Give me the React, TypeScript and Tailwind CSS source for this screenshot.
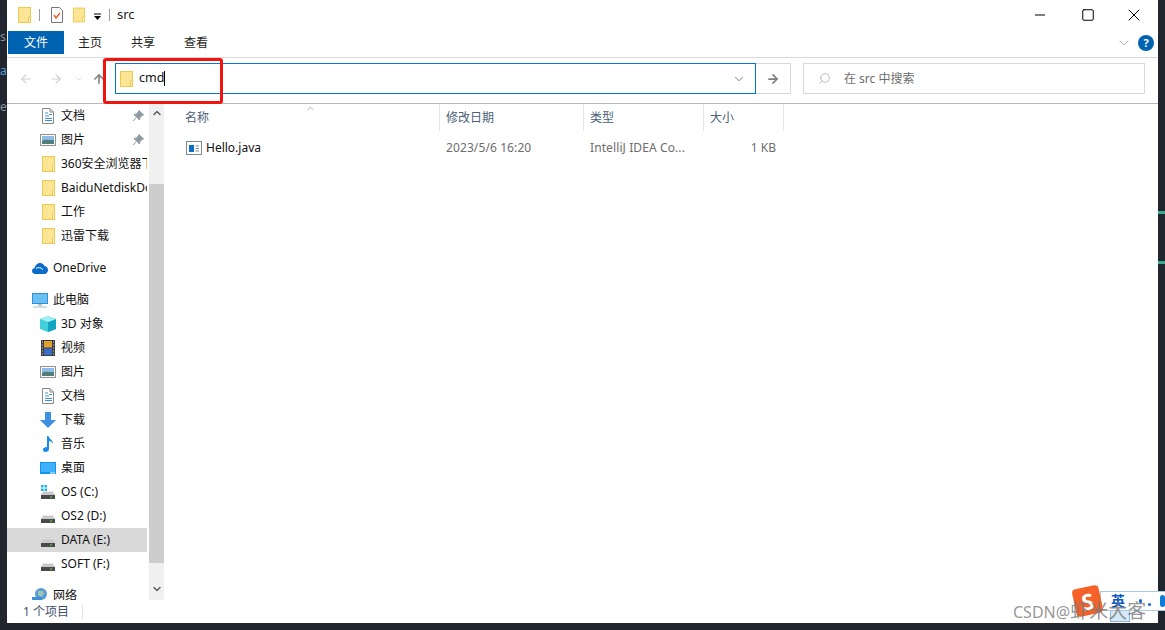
import { ArrowLeft, ArrowRight, ArrowUp, ChevronDown, ChevronUp, Minus, Search, Square, X } from 'lucide-react';
import type { ReactNode } from 'react';

const Folder = ({ className = 'w-[13px] h-[16px]' }: { className?: string }) => (
  <svg viewBox="0 0 13 16" className={className}>
    <rect x="0.5" y="0.5" width="12" height="15" fill="#fde596" stroke="#efc94f" />
    <path d="M10.500 10v5.500" stroke="#efc94f" />
    <path d="M10.500 10H12.500" stroke="#efc94f" />
    <rect x="11" y="10.500" width="1" height="4.500" fill="#fff6d0" />
  </svg>
);

const DocIcon = () => (
  <svg viewBox="0 0 12 16" className="w-[12px] h-[16px]">
    <path d="M.5.5h7.500l3.500 3.500v11.500H.5z" fill="#fff" stroke="#8a8a8a" />
    <path d="M8 .5V4h3.500" fill="none" stroke="#8a8a8a" />
    <path d="M3 5h3M7 6.500h3M3 8h4M3 10.500h7M3 12.500h7" stroke="#3f8fd6" />
  </svg>
);

const PicIcon = () => (
  <svg viewBox="0 0 16 12" className="w-[16px] h-[12px]">
    <rect x="0.5" y="0.5" width="15" height="11" fill="#fff" stroke="#8f8f8f" />
    <rect x="2" y="2" width="12" height="8" fill="#8fbce6" />
    <path d="M2 7c3-2 6-1 12-1v4H2z" fill="#4f7f78" />
  </svg>
);

const Video = () => (
  <svg viewBox="0 0 14 16" className="w-[14px] h-[16px]">
    <rect width="14" height="16" fill="#3c3c3c" />
    <rect x="3" y="1" width="8" height="6.500" fill="#e0a030" />
    <rect x="3" y="8.500" width="8" height="6.500" fill="#3a6fc8" />
    <path d="M1 2h1M1 5h1M1 8h1M1 11h1M1 14h1M12 2h1M12 5h1M12 8h1M12 11h1M12 14h1" stroke="#ddd" />
  </svg>
);

const Cube = () => (
  <svg viewBox="0 0 16 16" className="w-[16px] h-[16px]">
    <path d="M8 0l8 3v10l-8 3-8-3V3z" fill="#3fd0dc" />
    <path d="M8 6l8-3v10l-8 3z" fill="#12a5c4" />
    <path d="M8 0l8 3-8 3-8-3z" fill="#a2eef0" />
  </svg>
);

const Down = () => (
  <svg viewBox="0 0 16 16" className="w-[16px] h-[16px]">
    <path d="M5 0h6v8h5l-8 8-8-8h5z" fill="#3c92e0" />
  </svg>
);

const Music = () => (
  <svg viewBox="0 0 12 16" className="w-[12px] h-[16px]">
    <path d="M5 0h1.500c.5 3 4.500 3.500 4.500 8-1-2-2.500-3-4-3v8c0 2-1.500 3-3.500 3S1 15 1 13.500 2.500 11 5 11z" fill="#1c8ce8" />
  </svg>
);

const Desk = () => (
  <svg viewBox="0 0 16 12" className="w-[16px] h-[12px]">
    <rect width="16" height="12" fill="#1296ee" />
    <rect x="1" y="1" width="14" height="9" fill="#3fb1fa" />
    <path d="M10 11h5" stroke="#fff" />
  </svg>
);

const Disk = ({ win = false }: { win?: boolean }) => (
  <svg viewBox="0 0 16 16" className="w-[16px] h-[16px]">
    {win && <path d="M1 1h2.500v2.500H1zM4.500 1H7v2.500H4.500zM1 4.500h2.500V7H1zM4.500 4.500H7V7H4.500z" fill="#19b0f0" />}
    <path d="M3 7.500h10l2 3.500H1z" fill="#c9cbcb" />
    <rect x="1" y="11" width="14" height="4" fill="#4a4a4a" />
    <rect x="10" y="12.500" width="2" height="1" fill="#5fe05f" />
  </svg>
);

const Cloud = () => (
  <svg viewBox="0 0 16 11" className="w-[16px] h-[11px]">
    <path d="M3.500 11C1.500 11 0 9.800 0 8c0-1.500 1-2.700 2.500-3C3.200 2 5.500 0 8 0c2 0 3.700 1.200 4.500 3 2 .2 3.500 1.800 3.500 4 0 2.300-1.500 4-3.500 4z" fill="#0a6cc8" />
    <path d="M4 5.500c2-1.500 5-1 7 1" stroke="#fff" fill="none" />
  </svg>
);

const Monitor = () => (
  <svg viewBox="0 0 16 15" className="w-[16px] h-[15px]">
    <rect width="16" height="11" fill="#2f8fd8" />
    <rect x="1" y="1" width="14" height="9" fill="#67bff2" />
    <path d="M6 11h4v2H6z" fill="#c4c4c4" />
    <path d="M1 14h14" stroke="#9dbfd8" />
  </svg>
);

const Globe = () => (
  <svg viewBox="0 0 16 16" className="w-[16px] h-[16px]">
    <circle cx="9" cy="6" r="6" fill="#5d9bd6" />
    <path d="M6 3h5l1 3-3 3-3-2z" fill="#9fc7b0" />
    <rect x="0" y="9" width="10" height="7" fill="#3d8fd8" />
  </svg>
);

const Pin = () => (
  <svg viewBox="0 0 12 12" className="w-[12px] h-[12px]">
    <path d="M7 .5l4.500 4.500-1.500.5-2 2-.5 2.500L2 4.500 4.500 4l2-2zM4 8l-3 3" fill="#8e99a3" stroke="#8e99a3" />
  </svg>
);

const Row = ({ icon, label, pin = false, top = false, active = false, gap = false }: { icon: ReactNode; label: string; pin?: boolean; top?: boolean; active?: boolean; gap?: boolean }) => (
  <div className={`relative flex items-center h-6 w-[140px] shrink-0 gap-[5px] overflow-hidden ${top ? 'pl-[25px]' : 'pl-[33px]'} ${active ? 'bg-[#d9d9d9]' : ''} ${gap ? 'mt-2' : ''}`}>
    <span className="w-4 h-4 flex items-center justify-center shrink-0">{icon}</span>
    <span className="whitespace-nowrap text-[#111]">{label}</span>
    {pin && (
      <span className="absolute right-[3px] top-[6px]">
        <Pin />
      </span>
    )}
  </div>
);

const Nav = () => (
  <div className="w-[141px] overflow-hidden flex flex-col shrink-0">
    <Row icon={<DocIcon />} label="文档" pin />
    <Row icon={<PicIcon />} label="图片" pin />
    <Row icon={<Folder />} label="360安全浏览器下载" />
    <Row icon={<Folder />} label="BaiduNetdiskDownload" />
    <Row icon={<Folder />} label="工作" />
    <Row icon={<Folder />} label="迅雷下载" />
    <Row icon={<Cloud />} label="OneDrive" top gap />
    <Row icon={<Monitor />} label="此电脑" top gap />
    <Row icon={<Cube />} label="3D 对象" />
    <Row icon={<Video />} label="视频" />
    <Row icon={<PicIcon />} label="图片" />
    <Row icon={<DocIcon />} label="文档" />
    <Row icon={<Down />} label="下载" />
    <Row icon={<Music />} label="音乐" />
    <Row icon={<Desk />} label="桌面" />
    <Row icon={<Disk win />} label="OS (C:)" />
    <Row icon={<Disk />} label="OS2 (D:)" />
    <Row icon={<Disk />} label="DATA (E:)" active />
    <Row icon={<Disk />} label="SOFT (F:)" />
    <Row icon={<Globe />} label="网络" top gap />
  </div>
);

const Scrollbar = () => (
  <div className="w-[15px] ml-px bg-[#f0f0f0] flex flex-col shrink-0">
    <div className="h-[17px] flex items-center justify-center">
      <ChevronUp size={12} strokeWidth={3} className="text-[#606060]" />
    </div>
    <div className="h-[63px]" />
    <div className="h-[379px] bg-[#cdcdcd]" />
    <div className="h-[17px]" />
    <div className="h-[18px] flex items-center justify-center">
      <ChevronDown size={12} strokeWidth={3} className="text-[#606060]" />
    </div>
  </div>
);

export default function App() {
  return (
    <div
      className="relative w-[1165px] h-[630px] overflow-hidden bg-[#21262e] pl-[7px] pr-[7px] pb-[7px] text-[12px] font-['Noto_Sans','Noto_Sans_CJK_SC',sans-serif]"
    >
      {/* bits of the editor behind the window */}
      <span className="absolute left-0 top-[28px] text-[#8a94a0]">s</span>
      <span className="absolute left-0 top-[62px] text-[#4f9fd0]">a</span>
      <span className="absolute left-0 top-[98px] text-[#8a94a0]">e</span>
      <div className="absolute right-0 top-[211px] w-[7px] h-[3px] bg-[#3fa88f]" />
      <div className="absolute right-0 top-[261px] w-[7px] h-[3px] bg-[#3fa88f]" />

      <div className="relative h-full bg-white flex flex-col">
        {/* title bar */}
        <div className="h-[30px] flex items-center shrink-0 pl-[11px]">
          <Folder className="w-[13px] h-[16px]" />
          <div className="w-px h-3 bg-[#999] ml-[8px]" />
          <svg viewBox="0 0 12 16" className="w-3 h-4 ml-[11px]">
            <path d="M.5.5h8l3 3v12H.5z" fill="#fff" stroke="#777" />
            <path d="M3 8l2 3 4-5" fill="none" stroke="#e8602c" strokeWidth="1.500" />
          </svg>
          <Folder className="w-[12px] h-[16px] ml-[10px]" />
          <svg viewBox="0 0 7 7" className="w-[7px] h-[7px] ml-[9px] mt-[2px]">
            <path d="M0 1h7" stroke="#000" />
            <path d="M0 3h7L3.500 7z" fill="#000" />
          </svg>
          <div className="w-px h-3 bg-[#999] ml-[8px]" />
          <span className="ml-[7px] text-[#222] text-[13px]">src</span>
          <div className="ml-auto flex items-center pr-[14px] text-black">
            <Minus size={16} strokeWidth={1.500} className="mr-[33px]" />
            <Square size={14} strokeWidth={1.700} className="mr-[29px]" />
            <X size={20} strokeWidth={1.200} />
          </div>
        </div>

        {/* ribbon tabs */}
        <div className="h-[28px] flex shrink-0 border-b border-[#dadada] pr-[4px]">
          <div className="w-[56px] h-[23px] ml-px mt-px bg-[#0063b1] text-white flex items-center justify-center">文件</div>
          <div className="ml-[14px] h-[24px] mt-px flex items-center text-[#222]">主页</div>
          <div className="ml-[29px] h-[24px] mt-px flex items-center text-[#222]">共享</div>
          <div className="ml-[29px] h-[24px] mt-px flex items-center text-[#222]">查看</div>
          <div className="ml-auto h-[24px] mt-px flex items-center">
            <ChevronDown size={16} strokeWidth={1} className="text-[#888] mr-[6px]" />
            <div className="w-4 h-4 rounded-full bg-[#0063b1] text-white font-bold flex items-center justify-center text-[11px]">?</div>
          </div>
        </div>

        {/* address bar */}
        <div className="h-[46px] flex items-start shrink-0 border-b border-[#b8b8b8] pl-[12px] pr-[13px] pt-[5px]">
          <div className="h-[31px] flex items-center">
            <ArrowLeft size={14} className="text-[#cfcfcf]" />
            <ArrowRight size={14} className="text-[#cfcfcf] ml-[16px]" />
            <ChevronDown size={10} className="text-[#cfcfcf] ml-[11px]" />
            <ArrowUp size={14} strokeWidth={3} className="text-[#8a8a8a] ml-[8px]" />
          </div>
          <div className="ml-[9px] w-[641px] h-[31px] border border-[#0078d7] flex items-center pl-[4px] pr-[9px]">
            <Folder className="w-[13px] h-[16px]" />
            <span className="ml-[6px] text-[#111] text-[12.500px]">cmd</span>
            <span className="w-px h-[15px] bg-black" />
            <ChevronDown size={14} strokeWidth={1.200} className="ml-auto text-[#444]" />
          </div>
          <div className="w-[35px] h-[31px] border border-l-0 border-[#d9d9d9] flex items-center justify-center">
            <ArrowRight size={14} strokeWidth={3} className="text-[#808080]" />
          </div>
          <div className="ml-[12px] flex-1 h-[31px] border border-[#d9d9d9] flex items-center pl-[14px] text-[#6d6d6d]">
            <Search size={13} strokeWidth={1} className="-scale-x-100 text-[#888]" />
            <span className="ml-[13px]">在 src 中搜索</span>
          </div>
        </div>

        {/* body */}
        <div className="flex-1 flex min-h-0 overflow-hidden">
          <Nav />
          <Scrollbar />
          <div className="relative flex-1 ml-[3px]">
            <ChevronUp size={11} strokeWidth={1} className="absolute left-[138px] -top-[1px] text-[#555]" />
            <div className="h-[27px] grid grid-cols-[273px_144px_120px_80px] text-[#4c607a]">
              <div className="border-r border-[#e5e5e5] pl-[18px] flex items-center">名称</div>
              <div className="border-r border-[#e5e5e5] pl-[6px] flex items-center">修改日期</div>
              <div className="border-r border-[#e5e5e5] pl-[6px] flex items-center">类型</div>
              <div className="border-r border-[#e5e5e5] pl-[6px] flex items-center">大小</div>
            </div>
            <div className="mt-[6px] h-[22px] grid grid-cols-[273px_144px_120px_80px] items-center text-[#6d6d6d]">
              <div className="pl-[19px] flex items-center gap-1 text-[#111]">
                <svg viewBox="0 0 16 14" className="w-4 h-[14px]">
                  <rect x="0.5" y="0.5" width="15" height="13" fill="#fff" stroke="#7f8a94" />
                  <rect x="3" y="4" width="5" height="7" fill="#0f6cc8" />
                  <path d="M9.500 5H13M9.500 7.500H13M9.500 10H13" stroke="#7f8a94" />
                </svg>
                <span>Hello.java</span>
              </div>
              <div className="pl-[6px] tracking-[0.1px]">2023/5/6 16:20</div>
              <div className="pl-[6px] tracking-[0.1px]">IntelliJ IDEA Co...</div>
              <div className="text-right pr-[8px]">1 KB</div>
            </div>
          </div>
        </div>

        {/* status bar */}
        <div className="h-[23px] flex items-center shrink-0 pl-[16px] text-[#3f5168]">
          <span>1 个项目</span>
          <div className="ml-[13px] w-px h-4 bg-[#e8e8e8]" />
        </div>

        {/* red annotation */}
        <div className="absolute left-[96px] top-[58px] w-[120px] h-[46px] border-[3px] border-[#f0140f] rounded-[3px]" />
      </div>

      {/* input method bar */}
      <div className="absolute left-[1100px] top-[591px] w-[65px] h-[20px] bg-white border-y border-l border-[#a9c8e4] flex items-center pl-[10px]">
        <span className="text-[#0c58c8] font-bold text-[14px] leading-none">英</span>
        <span className="ml-[14px] w-[4px] h-[4px] rounded-full bg-[#0c6ad0]" />
        <span className="ml-[6px] w-[3px] h-[3px] rounded-full bg-[#0c6ad0] mt-[7px]" />
        <span className="ml-[9px] w-[6px] h-[12px] rounded-full bg-[#0c7ad8]" />
      </div>
      <div className="absolute left-[1110px] top-[611px] w-[20px] h-[11px] bg-[#d5e9f7] border border-t-0 border-[#8db4d4]" />
      <div className="absolute left-[1074px] top-[587px] w-[27px] h-[28px] rounded-[4px] -rotate-12 bg-[#f4622a] text-white font-bold text-[22px] leading-[28px] text-center">S</div>

      {/* watermark */}
      <span className="absolute left-[1013px] top-[600px] text-[16px] leading-[22px] text-[#7a7a7a]/80 whitespace-nowrap">
        CSDN@<span className="text-[19px]">虾米大客</span>
      </span>
    </div>
  );
}
